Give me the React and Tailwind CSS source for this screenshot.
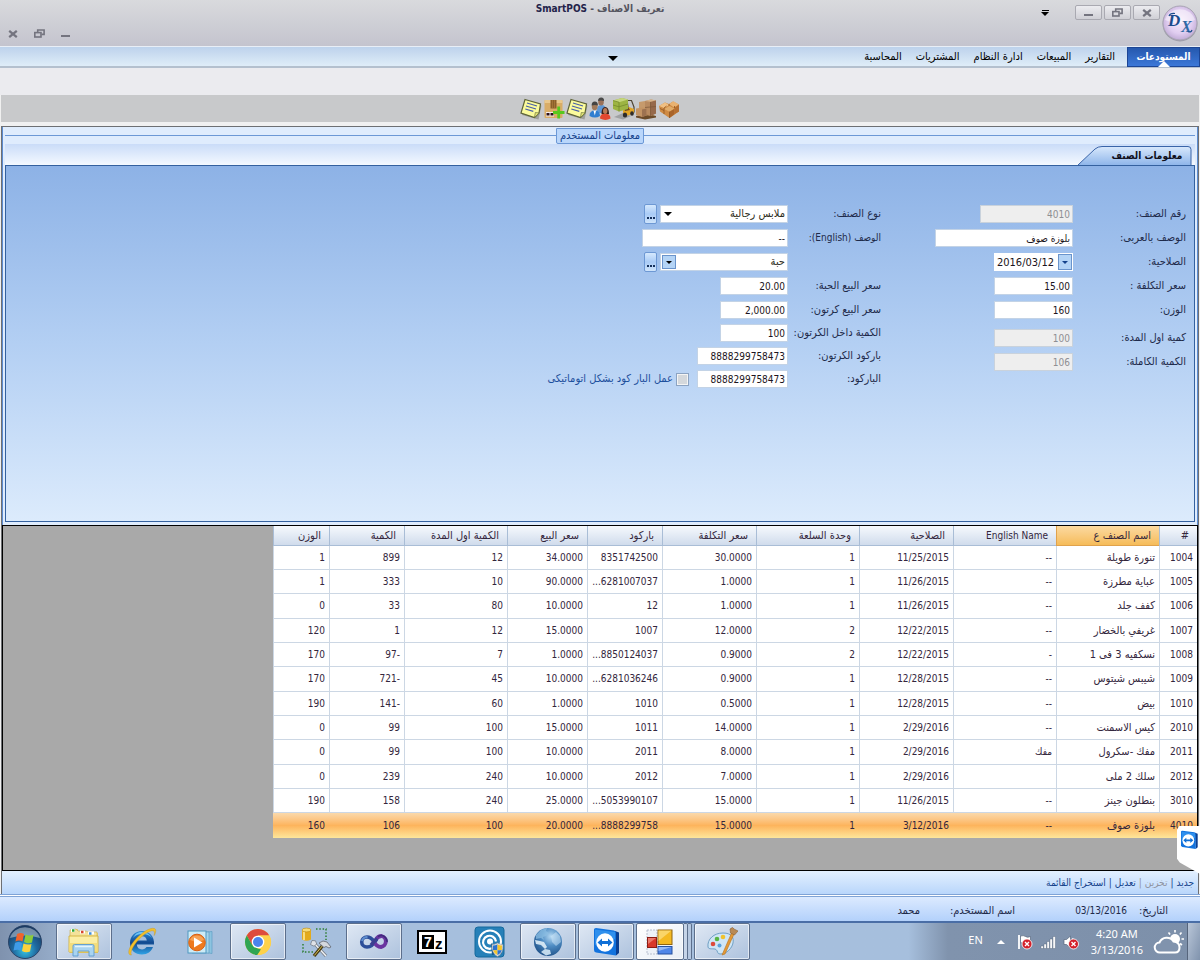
import React from "react";

const MENU = ["التقارير", "المبيعات", "ادارة النظام", "المشتريات", "المحاسبة"];

const COLUMNS = [
  { label: "#", width: "w-[38px]" },
  { label: "اسم الصنف ع", width: "w-[103px]", sorted: true },
  { label: "English Name", width: "w-[103px]", latin: true },
  { label: "الصلاحية", width: "w-[94px]" },
  { label: "وحدة السلعة", width: "w-[103px]" },
  { label: "سعر التكلفة", width: "w-[94px]" },
  { label: "باركود", width: "w-[75px]" },
  { label: "سعر البيع", width: "w-[80px]" },
  { label: "الكمية اول المدة", width: "w-[103px]" },
  { label: "الكمية", width: "w-[75px]" },
  { label: "الوزن", width: "w-[56px]" },
];

const ROWS = [
  ["1004", "تنورة طويلة", "--", "11/25/2015", "1", "30.0000", "8351742500", "34.0000", "12", "899", "1"],
  ["1005", "عباية مطرزة", "--", "11/26/2015", "1", "1.0000", "6281007037...", "90.0000", "10", "333", "1"],
  ["1006", "كفف جلد", "--", "11/26/2015", "1", "1.0000", "12", "10.0000", "80", "33", "0"],
  ["1007", "غريفي بالخضار", "--", "12/22/2015", "2", "12.0000", "1007", "15.0000", "12", "1", "120"],
  ["1008", "نسكفيه 3 فى 1", "-", "12/22/2015", "2", "0.9000", "8850124037...", "1.0000", "7", "-97", "170"],
  ["1009", "شيبس شيتوس", "--", "12/28/2015", "1", "0.9000", "6281036246...", "10.0000", "45", "-721", "170"],
  ["1010", "بيض", "--", "12/28/2015", "1", "0.5000", "1010", "1.0000", "60", "-141", "190"],
  ["2010", "كيس الاسمنت", "--", "2/29/2016", "1", "14.0000", "1011", "15.0000", "100", "99", "0"],
  ["2011", "مفك -سكرول", "مفك", "2/29/2016", "1", "8.0000", "2011", "10.0000", "100", "99", "0"],
  ["2012", "سلك 2 ملى", "", "2/29/2016", "1", "7.0000", "2012", "10.0000", "240", "239", "0"],
  ["3010", "بنطلون جينز", "--", "11/26/2015", "1", "15.0000", "5053990107...", "25.0000", "240", "158", "190"],
  ["4010", "بلوزة صوف", "--", "3/12/2016", "1", "15.0000", "8888299758...", "20.0000", "100", "106", "160"],
];

/* ---------- window glyphs ---------- */

const CloseGlyph = () => (
  <svg width="10" height="8" viewBox="0 0 10 8" fill="none" stroke="#74747f" strokeWidth="2.200">
    <path d="M1.200 0.800L8.800 7.200M8.800 0.800L1.200 7.200" />
  </svg>
);
const RestoreGlyph = () => (
  <svg width="11" height="9" viewBox="0 0 11 9" fill="none" stroke="#74747f" strokeWidth="1.600">
    <path d="M3.700 3V1h6.400v4.400H7.600" />
    <rect x="0.800" y="3.600" width="6.200" height="4.400" />
  </svg>
);
const MinGlyph = () => (
  <svg width="9" height="9" viewBox="0 0 9 9">
    <rect x="0" y="6" width="9" height="2" fill="#74747f" />
  </svg>
);
const Caret = ({ size = 8, fill = "#000" }) => (
  <svg width={size} height={size / 2} viewBox="0 0 8 4">
    <path d="M0 0h8L4 4z" fill={fill} />
  </svg>
);

const DxLogo = () => (
  <svg width="36" height="37" viewBox="0 0 36 37" direction="ltr">
    <defs>
      <radialGradient id="dx" cx="50%" cy="45%" r="60%">
        <stop offset="0" stopColor="#f8ecfb" />
        <stop offset="0.6" stopColor="#e0cdf0" />
        <stop offset="1" stopColor="#b9a4d0" />
      </radialGradient>
    </defs>
    <circle cx="18" cy="19" r="17.400" fill="#9c9ca8" />
    <circle cx="18" cy="18" r="17" fill="url(#dx)" stroke="#a9a4b4" />
    <path d="M3 15a15.400 14 0 0 1 30 0q-15 7-30 0z" fill="#fff" opacity="0.450" />
    <g fill="#1c4c8c" fontFamily="Liberation Serif, serif" fontStyle="italic" fontWeight="bold">
      <text x="6" y="21" fontSize="17">D</text>
      <text x="19" y="27" fontSize="16" fill="#2f6aa6">X</text>
    </g>
    <path d="M7 11Q8 8 13 8.500M30 25q-1 3-4 1.500" stroke="#1c4c8c" strokeWidth="1.200" fill="none" />
  </svg>
);

/* ---------- toolbar icons ---------- */

const NoteIcon = () => (
  <svg width="22" height="22" viewBox="0 0 22 22">
    <path d="M6 3l15.500 4.500-3 14L2 17z" fill="#6d6f60" opacity=".45" />
    <path d="M5 1.500l15.500 4.500-1.500 9-4.500 4.500L1 15z" fill="#fbfb9c" stroke="#5d6338" strokeWidth="1.200" />
    <path d="M19 15l-4.500 4.500.8-5z" fill="#e6e878" stroke="#6d7440" strokeWidth=".7" />
    <path d="M7 5l10 3M6 8l10 3M5.300 11l8 2.300" stroke="#4a5fa8" strokeWidth="1.300" />
  </svg>
);
const BoxAddIcon = () => (
  <svg width="22" height="22" viewBox="0 0 22 22">
    <rect x="1.500" y="2" width="18" height="18" rx="1" fill="#d9ad66" />
    <path d="M1.500 5V3q0-1 1-1h16q1 0 1 1v2z" fill="#e9c88c" />
    <rect x="7.500" y="2" width="6" height="8.500" fill="#8b5f2a" />
    <path d="M9.500 2v8M11.500 2v8" stroke="#a9783a" strokeWidth=".8" />
    <rect x="3" y="14" width="8" height="4.500" fill="#f6ecec" />
    <path d="M3.500 16.200h3M7.500 16.200h3" stroke="#2b0f16" strokeWidth="2.600" />
    <path d="M15.700 8.500v12M10 14.500h11.500" stroke="#57c81e" strokeWidth="2.800" />
  </svg>
);
const PeopleIcon = () => (
  <svg width="22" height="24" viewBox="0 0 22 24">
    <path d="M8 13q0-5 4.500-5T17 13v3H8z" fill="#5f97d4" />
    <ellipse cx="12" cy="5" rx="2.800" ry="3.600" fill="#9b7158" />
    <path d="M9 4q0-3.500 3.200-3.500T15 4q-3-1.200-6 0z" fill="#4a4a4a" />
    <path d="M0.500 19q0-5.500 5.200-5.500T11 19q-5 3-10.500 0z" fill="#2f7ed0" />
    <path d="M4.500 13.500l1.300 5 1.300-5z" fill="#fff" />
    <ellipse cx="5.700" cy="9.500" rx="2.900" ry="3.800" fill="#a07a5c" />
    <path d="M2.600 8.600q0-4 3.200-4t3.100 4q-3-1.400-6.300 0z" fill="#444" />
    <path d="M11 21.500q0-5 5.200-5t5.300 5q-5 2.800-10.500 0z" fill="#e2472f" />
    <path d="M12.500 17q0-7 3.700-7t3.800 7z" fill="#3a2019" />
    <ellipse cx="16.200" cy="14" rx="2.200" ry="3" fill="#b77a57" />
  </svg>
);
const ForkliftIcon = () => (
  <svg width="23" height="23" viewBox="0 0 23 23">
    <path d="M2 20l9-4 8 3-8 3.500z" fill="#7d7f84" opacity=".55" />
    <path d="M15 3.500h4.500L22 10v5l-5 1z" fill="none" stroke="#4d4432" strokeWidth="1.200" />
    <path d="M11 13l6-3 5 2v4l-6 2.500-5-2z" fill="#e2a526" />
    <path d="M12 12l4-2 2 3-5 1z" fill="#6b4b1e" />
    <path d="M1 3.500l9-2.500 6 1.500v9.500L7 14.500 1 12z" fill="#9db443" />
    <path d="M1 3.500l9-2.500 6 1.500-9 2.700z" fill="#c5d67a" />
    <path d="M1 8l6 1.800L16 7M7 5.200v9.300M1 3.500l6 1.700" stroke="#6f8428" strokeWidth=".7" fill="none" />
    <ellipse cx="13" cy="18" rx="2.200" ry="2.600" fill="#2e2c2a" />
    <ellipse cx="20" cy="16.500" rx="1.800" ry="2.300" fill="#2e2c2a" />
  </svg>
);
const PalletIcon = () => (
  <svg width="22" height="22" viewBox="0 0 22 22">
    <path d="M1 18l9 3 11-3-9-3z" fill="#8a653a" />
    <path d="M1 18v1.500l9 2 11-2V18" fill="#6c4b29" />
    <path d="M10 3l6-1.500 5 1v13l-5.500 2.500L10 16z" fill="#b88a60" />
    <path d="M15.500 3.500L21 2.500v13L15.500 18z" fill="#96694a" />
    <path d="M10 3l6-1.500 5 1-5.500 1.200z" fill="#d8b48c" />
    <path d="M4 4l6-1v7H4z" fill="#c69a6c" />
    <path d="M1 10.500l7-1 3.500 1v7L7 19l-6-2z" fill="#c39464" />
    <path d="M7 11.500l4.500-1v7L7 19z" fill="#9d7250" />
    <path d="M10 9.500l11-1M15.500 4v14" stroke="#7b5636" strokeWidth=".7" />
  </svg>
);
const BoxesIcon = () => (
  <svg width="22" height="20" viewBox="0 0 22 20">
    <path d="M1 7l6-3.500L11 5l4-2.500 6 3v7L11.500 19 2 12.500z" fill="#cf8a42" />
    <path d="M1 7l6-3.500L11.500 6 6 9z" fill="#efbf82" />
    <path d="M11 5l4.500-2.800L21 5.500l-5 3z" fill="#e9b271" />
    <path d="M6 10l5.500-3 5 2.700-5 3z" fill="#e0ac6a" />
    <path d="M11.500 12.700l5-3v5.500l-5 3.800z" fill="#a9642a" />
    <path d="M16.500 9l4.500-3.500v7L16.500 15z" fill="#b56f31" />
    <path d="M6 9v6M11.500 12.700V19M2 9.500l4 2M6 9l2.500-2M11 5v2M16.500 9V7" stroke="#8f5522" strokeWidth=".8" />
  </svg>
);

/* ---------- taskbar icons ---------- */

const TeamViewerGlyph = ({ size = 30 }) => (
  <svg width={size} height={size} viewBox="0 0 30 30">
    <path d="M24 4l4 1.500v20.500l-3 2.500z" fill="#0a3f92" />
    <path d="M3 2.500Q3 1 5 1l18 2.500q2 .5 2 2.500v22.500L5 25.500q-2-.4-2-2.500z" fill="#1273de" />
    <path d="M4 2.500L24 5v7L4 18z" fill="#47a8fa" opacity=".55" />
    <ellipse cx="14" cy="15.500" rx="8.800" ry="9.200" fill="#fff" />
    <path d="M6.500 15.500l4.500-4v2.600h6v-2.600l4.500 4-4.500 4v-2.600h-6v2.600z" fill="#0f6fd6" />
  </svg>
);
const StartOrb = () => (
  <svg width="36" height="36" viewBox="0 0 36 36">
    <defs>
      <radialGradient id="orb" cx="50%" cy="75%" r="70%">
        <stop offset="0" stopColor="#35c6e6" />
        <stop offset="0.5" stopColor="#1f6aa0" />
        <stop offset="1" stopColor="#183a63" />
      </radialGradient>
    </defs>
    <circle cx="18" cy="18" r="16.500" fill="url(#orb)" stroke="#2b4468" />
    <path d="M3 14a15.400 14 0 0 1 30 0q-15-5-30 0z" fill="#fff" opacity=".4" />
    <path d="M10 10q4-2 7 0l-1.500 7.500q-3.500-1.800-7 0z" fill="#f0642c" />
    <path d="M18.500 10.500q4 2 8 .3L25 18.500q-4 1.600-8-.5z" fill="#8ccc3c" />
    <path d="M8 19q3.500-1.800 7 0l-1.500 7.500q-3-1.600-7 0z" fill="#3f9be8" />
    <path d="M16.500 19.500q4 2 8 .4L23 27.500q-4 1.800-8-.5z" fill="#fbd23c" />
  </svg>
);
const ExplorerIcon = () => (
  <svg width="32" height="30" viewBox="0 0 32 30">
    <path d="M2 3l8-1v4h20v20H2z" fill="#e9cf6c" />
    <path d="M2 3l6-1 2 2h8l2 1h9v5H2z" fill="#f3e29a" stroke="#c9ac4a" strokeWidth=".6" />
    <path d="M3 3.500h4M12 5h5M20 6h6" stroke="#fff" strokeWidth="3" />
    <path d="M4 3.500h2.500" stroke="#2fa832" strokeWidth="2.500" />
    <path d="M13 5h2.500" stroke="#d9452f" strokeWidth="2.500" />
    <path d="M21 6.500h2.500" stroke="#3d8fe0" strokeWidth="2.500" />
    <path d="M1 9h29v16H1z" fill="#fbeea4" stroke="#d0b040" strokeWidth=".9" />
    <path d="M1 16h29v9H1z" fill="#f1d873" opacity=".8" />
    <path d="M5 29V19q0-1.500 1.500-1.500h18Q26 17.500 26 19v10h-5v-5h-11v5z" fill="#a9d4f0" stroke="#5b9bd0" strokeWidth=".9" />
    <path d="M7 19.500h17" stroke="#e4f4fd" strokeWidth="1.500" />
  </svg>
);
const IeIcon = () => (
  <svg width="32" height="32" viewBox="0 0 32 32">
    <defs>
      <linearGradient id="ie" x1="0" y1="0" x2="0" y2="1">
        <stop offset="0" stopColor="#2f8fdc" />
        <stop offset="0.5" stopColor="#12498f" />
        <stop offset="1" stopColor="#2fa3e6" />
      </linearGradient>
    </defs>
    <path d="M16 5C9 5 4 10 4 17s5 11.500 12 11.500c5.500 0 9.500-3 11-7.500h-6.500c-1 1.600-2.500 2.400-4.500 2.400-3 0-5-1.700-5.200-4.900H28C28.600 10.500 23.500 5 16 5zm-5 9.500c.5-2.700 2.300-4.200 5-4.200s4.500 1.500 4.800 4.200z" fill="url(#ie)" />
    <path d="M7 12c2-4.500 5-6 9-6 4.500 0 8 2 10 6-2-2.500-5.500-4-10-4-4 0-7 1.500-9 4z" fill="#6fc4f4" />
    <path d="M5.500 29C1 29.500 2 22 8.500 14.500 15 7 24 1 28.500 2.500c2 .8 1.500 4-.3 7 .5-2.800.3-4.300-1-4.700C23.500 4 16 9.500 11 15.500 5.500 22 4 27.500 5.500 29z" fill="#f2c02c" stroke="#c8921a" strokeWidth=".4" />
  </svg>
);
const WmpIcon = () => (
  <svg width="28" height="26" viewBox="0 0 28 26">
    <path d="M10 4l16-1.500v22L10 22z" fill="#8cc4e0" stroke="#5f9fc4" strokeWidth=".7" />
    <path d="M6 3h17v21H6z" fill="#a7d5ea" stroke="#5f9fc4" strokeWidth=".7" />
    <rect x="2" y="2" width="18" height="22" fill="#cdebf6" stroke="#4f97c0" />
    <circle cx="11" cy="13.500" r="8.300" fill="#ee7a1e" stroke="#d85f12" />
    <path d="M4 11a7.500 7 0 0 1 14 0q-7 3-14 0z" fill="#f9b26a" opacity=".7" />
    <path d="M8 8.500v10l8.500-5z" fill="#fff" />
  </svg>
);
const ChromeIcon = () => (
  <svg width="28" height="28" viewBox="0 0 28 28">
    <circle cx="14" cy="14" r="13" fill="#fdd14b" />
    <path d="M2.740 7.500A13 13 0 0 1 25.260 7.500H14L8.370 17.250z" fill="#dd4b3e" />
    <path d="M2.740 7.500L8.370 17.250 14 20.500l3 1-3.800 5.500A13 13 0 0 1 2.740 7.500z" fill="#2fa553" />
    <path d="M25.260 7.500H14l5.630 9.750L14 27A13 13 0 0 0 25.260 7.500z" fill="#fdd14b" />
    <circle cx="14" cy="14" r="6.300" fill="#fff" />
    <circle cx="14" cy="14" r="5" fill="#4a84ee" />
  </svg>
);
const DbToolsIcon = () => (
  <svg width="32" height="32" viewBox="0 0 32 32">
    <path d="M16 3h10v11M3 18v8h10" fill="none" stroke="#2f7d32" strokeWidth="1.500" strokeDasharray="1.500 1.800" />
    <path d="M2 4h9v9.500q-4.500 2.500-9 0z" fill="#e3ab1d" />
    <path d="M4 5v9" stroke="#fbe38c" strokeWidth="1.800" />
    <ellipse cx="6.500" cy="4" rx="4.500" ry="1.900" fill="#f7dc74" stroke="#b98511" strokeWidth=".6" />
    <path d="M13 16l13 14" stroke="#7a7f88" strokeWidth="3.200" />
    <path d="M13 16l13 14" stroke="#f0f2f5" strokeWidth="1.400" />
    <path d="M24 18L14 30" stroke="#4a3c14" strokeWidth="3.400" />
    <path d="M23.500 18.500L14.300 29.500" stroke="#d8c25a" strokeWidth="1" />
    <path d="M19 17q4-3.500 8-1l4 5-2 1-3-1.500-2 1z" fill="#d4d8de" stroke="#5f6570" strokeWidth=".8" />
    <path d="M10.500 18.500l1.500-4 3.500.3 1.200 3.200-2.700 2.200z" fill="#dfe2e8" stroke="#6c727c" strokeWidth=".7" />
  </svg>
);
const VsIcon = () => (
  <svg width="30" height="18" viewBox="0 0 30 18">
    <path d="M17.500 6.500C14.500 12 11.500 14 8 14a5.300 5 0 0 1 0-10c2.800 0 5 1.600 7.200 4.600" fill="none" stroke="#2d4f9a" strokeWidth="3.600" />
    <path d="M3 8q1-4 5.500-4" fill="none" stroke="#5f8fd0" strokeWidth="2" />
    <path d="M14 7.500c2.500 4.500 5 6.500 8 6.500a5.600 5.600 0 0 0 .5-11c-2.200 0-4 1-5.800 3.500" fill="none" stroke="#6a35a0" strokeWidth="3.800" />
    <path d="M19 3.500q3.500-2.200 6.500.2T28 9" stroke="#3f2a7c" strokeWidth="1.600" fill="none" />
    <path d="M12 12l6-6.500" stroke="#3a3f90" strokeWidth="3.400" />
  </svg>
);
const SevenZipIcon = () => (
  <svg width="30" height="24" viewBox="0 0 30 24">
    <rect x="1" y="1" width="28" height="22" fill="#fff" stroke="#000" strokeWidth="2" />
    <rect x="5" y="5" width="12" height="14" fill="#000" />
    <text x="7" y="17" fontSize="14" fontWeight="bold" fontFamily="Liberation Sans, sans-serif" fill="#fff">7</text>
    <text x="18" y="19" fontSize="15" fontWeight="bold" fontFamily="Liberation Sans, sans-serif" fill="#000">z</text>
  </svg>
);
const RadarIcon = () => (
  <svg width="32" height="32" viewBox="0 0 32 32">
    <rect x="1" y="1" width="29" height="30" rx="3" fill="#2680b8" stroke="#15689c" />
    <circle cx="16" cy="15.500" r="11" fill="none" stroke="#fff" strokeWidth="2" />
    <path d="M20 21a6.500 6.500 0 1 1 2-5.500" fill="none" stroke="#fff" strokeWidth="2.200" />
    <circle cx="16" cy="15.500" r="3" fill="#fff" />
    <path d="M17 17l11 11-10 1z" fill="#1a5f91" />
    <path d="M18 18.500q3 0 5.500-1.500Q26 18.500 29 18.500q.5 9-5.500 12-6-3-5.500-12z" fill="#e8e8e8" stroke="#8a8f98" strokeWidth=".6" />
    <path d="M19 19.500q2.500 0 4.500-1.200v6H19z" fill="#2c73d0" />
    <path d="M23.500 18.300q2 1.200 4.500 1.200l-.2 4.800h-4.300z" fill="#f5c52a" />
    <path d="M19.200 24.300h4.300v5q-3.500-1.500-4.300-5z" fill="#f5c52a" />
    <path d="M23.500 24.300h4.300q-.8 3.500-4.300 5z" fill="#2c73d0" />
  </svg>
);
const GlobeIcon = () => (
  <svg width="32" height="30" viewBox="0 0 32 30">
    <defs>
      <radialGradient id="glb" cx="60%" cy="30%" r="75%">
        <stop offset="0" stopColor="#b4d8f2" />
        <stop offset="0.45" stopColor="#4f8dc4" />
        <stop offset="1" stopColor="#1d4f86" />
      </radialGradient>
    </defs>
    <circle cx="16" cy="15" r="14" fill="url(#glb)" />
    <path d="M4 8l5-5 6-2-1 3 3 2-3 3-3 1 1 3-3-2-5 1z" fill="#8fc0e4" opacity=".7" />
    <path d="M3 13l5 1 4 1 3 5-2 2-4-4-5-1z" fill="#e8f4fc" opacity=".85" />
    <path d="M9 25l4-3 5 1 1 4-5 1.500z" fill="#dceefa" opacity=".85" />
    <path d="M19 9l5-4 4 4 1 6-5 4-4-4z" fill="#d4eafa" opacity=".5" />
  </svg>
);
const FormsIcon = () => (
  <svg width="28" height="26" viewBox="0 0 28 26">
    <path d="M1 1h10v24H1z" fill="#eef2f8" stroke="#a9b3c4" strokeWidth=".8" strokeDasharray="2 1" />
    <rect x="12" y="1" width="14" height="14.500" fill="#f4b922" stroke="#8f6410" />
    <path d="M12.500 1.500h13L12.500 12z" fill="#fbdc7c" opacity=".8" />
    <rect x="1.500" y="8.500" width="9" height="10" fill="#d8382a" stroke="#8b1c14" />
    <path d="M2 9h8l-8 6z" fill="#f08a7e" opacity=".8" />
    <rect x="12" y="17.500" width="14" height="7.500" fill="#4f86e8" stroke="#26519f" />
    <path d="M12.500 18h13l-13 4z" fill="#a8c6fa" opacity=".8" />
  </svg>
);
const PaintIcon = () => (
  <svg width="32" height="30" viewBox="0 0 32 30">
    <path d="M2 20C1 12 8 6 17 6s11 5 10 10-6 11-13 11c-3 0-2-3-4-4.500S2.500 23 2 20z" fill="#cfe6f5" stroke="#6f9fc4" />
    <circle cx="7" cy="17" r="2.300" fill="#dc4a3a" />
    <circle cx="11" cy="12" r="2.300" fill="#58b544" />
    <circle cx="17" cy="10" r="2.300" fill="#f0c22c" />
    <circle cx="13.500" cy="18.500" r="2" fill="#5aa2dc" />
    <path d="M16 28L26 5l2.500 1L19 27z" fill="#e59a35" stroke="#b5701c" strokeWidth=".6" />
    <path d="M24 2q3-3 4 0l4 2-3.500 4-4-2z" fill="#b98a55" stroke="#8a6236" strokeWidth=".6" />
  </svg>
);

const TASKS = [
  { name: "Explorer", icon: ExplorerIcon, open: true },
  { name: "Internet Explorer", icon: IeIcon },
  { name: "Media Player", icon: WmpIcon },
  { name: "Chrome", icon: ChromeIcon, open: true },
  { name: "SQL Tools", icon: DbToolsIcon },
  { name: "Visual Studio", icon: VsIcon, open: true },
  { name: "7-Zip", icon: SevenZipIcon },
  { name: "Remote Tool", icon: RadarIcon },
  { name: "Globe", icon: GlobeIcon, open: true },
  { name: "TeamViewer", icon: TeamViewerGlyph, open: true },
  { name: "SmartPOS", icon: FormsIcon, open: true, stacked: true },
  { name: "Paint", icon: PaintIcon, open: true },
];

const BadgeX = ({ x }) => (
  <g transform={`translate(${x} 10)`}>
    <circle r="5" fill="#d3202a" stroke="#fff" strokeWidth=".8" />
    <path d="M-2-2l4 4M2-2l-4 4" stroke="#fff" strokeWidth="1.400" />
  </g>
);
const FlagIcon = () => (
  <svg width="16" height="16" viewBox="0 0 16 16">
    <path d="M2 1v14" stroke="#fff" strokeWidth="1.800" />
    <path d="M3.500 2q3-1 5 .5t5 0V9q-3 1-5 0t-5 0z" fill="#fff" stroke="#56657c" strokeWidth=".7" />
    <BadgeX x={10} />
  </svg>
);
const SignalIcon = () => (
  <svg width="16" height="16" viewBox="0 0 16 16" fill="#fff" stroke="#4b5a72" strokeWidth=".4">
    <path d="M1 12h2.400v2.500H1zM4 10h2.400v4.500H4zM7 7.500h2.400v7H7zM10 5h2.400v9.500H10zM13 2.500h2.400v12H13z" />
  </svg>
);
const SpeakerIcon = () => (
  <svg width="16" height="16" viewBox="0 0 16 16">
    <path d="M1 5.500h2.500L7.500 2v12l-4-3.500H1z" fill="#fff" stroke="#56657c" strokeWidth=".7" />
    <path d="M9.500 4q2 2 1.500 5" stroke="#fff" fill="none" />
    <BadgeX x={10.5} />
  </svg>
);
const WeatherIcon = () => (
  <svg width="32" height="26" viewBox="0 0 32 26">
    <circle cx="22" cy="10" r="5" fill="#fff" />
    <path d="M22 1v2.500M15.500 3.500l1.600 2M28.500 3.500l-1.600 2M31 10h-2.500M29 16l-2-1.500" stroke="#fff" strokeWidth="1.600" />
    <path d="M7 23.500a5 5 0 0 1-.5-10 8 8 0 0 1 14-1q6 .5 6 6 0 5-4.500 5z" fill="#8093ad" stroke="#fff" strokeWidth="2" />
  </svg>
);

/* ---------- form pieces ---------- */

const inputBase =
  "h-[18px] min-w-0 border border-[#c3d3e6] bg-white px-[2px] text-right text-[#1b1420] outline-none disabled:border-[#c9d2dc] disabled:bg-[#eeeeee] disabled:text-[#8f8f93]";

function Field({ id, label, value, width, disabled, labelWidth }) {
  return (
    <div className="flex items-center">
      <label htmlFor={id} className={`shrink-0 whitespace-nowrap text-[11px] ${labelWidth}`}>
        {label}
      </label>
      <input id={id} defaultValue={value} disabled={disabled} className={`${inputBase} ${width}`} />
    </div>
  );
}

function Lookup({ id, label, value, boxed }) {
  return (
    <div className="flex h-[18px] items-center text-[11px]">
      {label ? (
        <label htmlFor={id} className="w-[93px] shrink-0 whitespace-nowrap">{label}</label>
      ) : (
        <span className="w-[93px] shrink-0" />
      )}
      <div className="relative">
        <select
          id={id}
          aria-label={label ? undefined : "الوحدة"}
          className="block h-[18px] w-32 appearance-none border border-[#c3d3e6] bg-white px-[2px] text-[#2d2d20] outline-none"
        >
          <option>{value}</option>
        </select>
        <span
          className={
            boxed
              ? "pointer-events-none absolute left-[2px] top-[2px] flex h-[14px] w-[14px] items-center justify-center border border-[#6a94cc] bg-[#b4d4f6]"
              : "pointer-events-none absolute left-1 top-[7px] flex"
          }
        >
          <Caret size={boxed ? 6 : 8} />
        </span>
      </div>
      <button
        type="button"
        aria-label="بحث"
        className="mr-[3px] flex h-5 w-[13px] items-end justify-center rounded-xs border border-[#6d98d4] bg-linear-to-b from-[#d5e8fd] via-[#a9cbf6] to-[#cfe4fb] pb-1"
      >
        <svg width="8" height="2" viewBox="0 0 8 2" fill="#15305c">
          <path d="M0 0h2v2H0zM3 0h2v2H3zM6 0h2v2H6z" />
        </svg>
      </button>
    </div>
  );
}

const windowBtn =
  "flex h-[15px] w-[27px] items-center justify-center rounded-xs border border-[#a9a9b1] bg-linear-to-b from-[#ececf0] to-[#d0d0d6]";

export default function App() {
  return (
    <div
      dir="rtl"
      className="flex min-h-screen flex-col bg-[#f0f0f0] font-['DejaVu_Sans_Condensed','DejaVu_Sans',sans-serif] text-[10px] leading-[14px] text-[#1e2a4a]"
    >
      {/* title bar */}
      <header className="grid h-[46px] grid-cols-[1fr_auto_1fr] bg-linear-to-b from-[#d9dadd] to-[#c4c4ce]">
        <div className="flex items-start gap-[2px] pr-[2px] pt-[5px]">
          <DxLogo />
          <button type="button" aria-label="اغلاق" className={windowBtn}><CloseGlyph /></button>
          <button type="button" aria-label="استعادة" className={windowBtn}><RestoreGlyph /></button>
          <button type="button" aria-label="تصغير" className={windowBtn}><MinGlyph /></button>
          <button type="button" aria-label="تخصيص" className="mr-6 mt-[5px] flex flex-col items-center gap-px">
            <span className="h-px w-[7px] bg-black" />
            <Caret size={8} />
          </button>
        </div>
        <h1 className="pt-[2px] font-bold text-[#55555f]">
          تعريف الاصناف - <span className="text-[#23234a]">SmartPOS</span>
        </h1>
        <div className="flex items-end justify-end gap-4 pb-2 pl-2">
          <button type="button" aria-label="تصغير النافذة"><MinGlyph /></button>
          <button type="button" aria-label="استعادة النافذة"><RestoreGlyph /></button>
          <button type="button" aria-label="اغلاق النافذة"><CloseGlyph /></button>
        </div>
      </header>

      {/* ribbon tabs */}
      <nav className="flex h-[22px] border-b-2 border-t border-b-[#b4c0ce] border-t-[#e8eef6] bg-linear-to-b from-[#bdd2ec] to-[#dfedf8]">
        <div className="flex w-1/2 items-stretch">
          <a href="#stores" className="relative -mb-px w-[73px] border border-[#1c4595] bg-linear-to-b from-[#2558ae] to-[#3c78d8] text-center leading-[18px] font-bold text-white">
            المستودعات
            <svg width="12" height="6" viewBox="0 0 12 6" className="absolute -bottom-px left-1/2 -translate-x-1/2">
              <path d="M0 6l6-6 6 6z" fill="#fff" />
            </svg>
          </a>
          <div className="flex flex-1 items-center gap-[14px] pr-3 text-[11px] text-black">
            {MENU.map((m) => (
              <a key={m} href="#menu" className="whitespace-nowrap">{m}</a>
            ))}
          </div>
        </div>
        <div className="flex w-1/2 items-center pt-1">
          <button type="button" aria-label="المزيد" className="-mr-[18px] flex">
            <Caret size={10} />
          </button>
        </div>
      </nav>
      <div className="h-[27px] bg-[#ebebef]" />
      <div className="mx-px flex h-[27px] items-center justify-center bg-[#c8c9cb]">
        {[BoxesIcon, PalletIcon, ForkliftIcon, PeopleIcon, NoteIcon, BoxAddIcon, NoteIcon].map((Icon, i) => (
          <button key={i} type="button" aria-label={`اداة ${i + 1}`} className="flex w-[23px] justify-center">
            <Icon />
          </button>
        ))}
      </div>
      <div className="h-1 bg-[#f0f0f1]" />

      {/* item form */}
      <main className="mx-px flex flex-1 flex-col border-x border-t border-[#6d6f73]">
        <section className="border-x border-[#5b8bd0] bg-[#dfecfd] px-[2px] pb-[3px]">
          <div className="flex h-[17px] items-center">
            <span className="h-px flex-1 bg-[#6c98d6]" />
            <h2 className="rounded-b-xs border border-[#6c98d6] bg-[#b9d6fb] px-[3px] text-[11px] leading-[14px] text-[#15428b]">
              معلومات المستخدم
            </h2>
            <span className="h-px flex-1 bg-[#6c98d6]" />
          </div>
          <div className="flex h-[21px] items-end bg-linear-to-b from-[#cadcf8] to-[#f4f9ff] pr-[3px]">
            <button type="button" className="relative h-[19px] w-[114px] pl-6 text-center leading-[19px] font-bold text-[#10101c]">
              <svg className="absolute inset-0 h-full w-full" viewBox="0 0 114 19" preserveAspectRatio="none">
                <defs>
                  <linearGradient id="tab" x1="0" y1="0" x2="0" y2="1">
                    <stop offset="0" stopColor="#d8e8fc" />
                    <stop offset="1" stopColor="#8fb6ea" />
                  </linearGradient>
                </defs>
                <path d="M0 19L17 3Q20 .5 24 .5h86q3 0 3 3V19" fill="url(#tab)" stroke="#3a64a8" />
              </svg>
              <span className="relative">معلومات الصنف</span>
            </button>
          </div>
          <form className="flex gap-[54px] border border-[#34619f] bg-linear-to-b from-[#8db2e6] via-[#b3cff3] to-[#dcebfc] pb-[133px] pr-2 pt-[39px]">
            <div className="flex w-[251px] flex-col gap-[10px]">
              <div className="flex flex-col gap-[6px]">
                <Field id="no" label="رقم الصنف:" value="4010" width="w-[93px]" labelWidth="w-[113px]" disabled />
                <Field id="ar" label="الوصف بالعربى:" value="بلوزة صوف" width="w-[138px]" labelWidth="w-[113px]" />
                <div className="flex items-center">
                  <label htmlFor="exp" className="w-[113px] shrink-0 text-[11px]">الصلاحية:</label>
                  <div className="flex h-[18px] w-[79px] items-center bg-white pr-px">
                    <button type="button" aria-label="التقويم" className="flex h-4 w-[14px] shrink-0 items-center justify-center border border-[#6a94cc] bg-[#b4d4f6]">
                      <Caret size={6} fill="#15428b" />
                    </button>
                    <input id="exp" defaultValue="2016/03/12" className="h-full w-full min-w-0 bg-white pr-1 text-[11px] text-[#1b1420] outline-none" />
                  </div>
                </div>
                <Field id="cost" label="سعر التكلفة :" value="15.00" width="w-[79px]" labelWidth="w-[113px]" />
                <Field id="weight" label="الوزن:" value="160" width="w-[79px]" labelWidth="w-[113px]" />
              </div>
              <div className="flex flex-col gap-[6px]">
                <Field id="open" label="كمية اول المدة:" value="100" width="w-[79px]" labelWidth="w-[113px]" disabled />
                <Field id="total" label="الكمية الكاملة:" value="106" width="w-[79px]" labelWidth="w-[113px]" disabled />
              </div>
            </div>
            <div className="flex w-[335px] flex-col gap-[6px]">
              <Lookup id="kind" label="نوع الصنف:" value="ملابس رجالية" />
              <Field
                id="en"
                label={<span className="text-[10px]">الوصف (English):</span>}
                value="--"
                width="w-[146px]"
                labelWidth="w-[93px]"
              />
              <Lookup id="unit" value="حبة" boxed />
              <Field id="p1" label="سعر البيع الحبة:" value="20.00" width="w-[68px]" labelWidth="w-[93px]" />
              <div className="flex flex-col gap-[5px]">
                <Field id="p2" label="سعر البيع كرتون:" value="2,000.00" width="w-[68px]" labelWidth="w-[93px]" />
                <Field id="qty" label="الكمية داخل الكرتون:" value="100" width="w-[68px]" labelWidth="w-[93px]" />
                <Field id="bc1" label="باركود الكرتون:" value="8888299758473" width="w-[91px]" labelWidth="w-[93px]" />
                <div className="flex items-center">
                  <Field id="bc2" label="الباركود:" value="8888299758473" width="w-[91px]" labelWidth="w-[93px]" />
                  <label className="mr-[9px] flex items-center gap-1 whitespace-nowrap text-[11px] text-[#1d4f9c]">
                    <input type="checkbox" className="h-[11px] w-[11px] appearance-none border border-[#f4f4f4] bg-[#d4d8dc] outline outline-[#8ba3c2]" />
                    عمل البار كود بشكل اتوماتيكى
                  </label>
                </div>
              </div>
            </div>
          </form>
        </section>

        {/* items grid */}
        <section className="relative flex-1 border border-black bg-[#a9a9a9]">
          <table className="w-[924px] table-fixed border-separate border-spacing-0 bg-white text-[#33263c]">
            <thead>
              <tr>
                {COLUMNS.map((c) => (
                  <th
                    key={c.label}
                    scope="col"
                    className={`h-5 whitespace-nowrap border-b border-l p-0 pr-2 text-right font-normal ${c.width} ${
                      c.latin ? "text-[10px]" : "text-[11px]"
                    } ${
                      c.sorted
                        ? "border-[#e0a24c] bg-linear-to-b from-[#fbd9a0] to-[#f6bc58]"
                        : "border-[#a9bdd6] bg-linear-to-b from-[#f6f9fd] to-[#d0dcec]"
                    }`}
                  >
                    {c.label}
                  </th>
                ))}
              </tr>
            </thead>
            <tbody>
              {ROWS.map((r, i) => (
                <tr
                  key={r[0]}
                  className={`h-6 nth-[3n]:h-[25px] ${
                    i === ROWS.length - 1 ? "bg-linear-to-b from-[#fad9ab] via-[#fdb45c] to-[#fde69a]" : ""
                  }`}
                >
                  {r.map((v, j) => (
                    <td
                      key={j}
                      className={`whitespace-nowrap p-0 pr-1 ${j === 1 ? "text-[11px]" : ""} ${
                        i === ROWS.length - 1 ? "" : "border-b border-l border-[#ccd7e4]"
                      }`}
                    >
                      {v}
                    </td>
                  ))}
                </tr>
              ))}
            </tbody>
          </table>
          <div className="absolute -bottom-1 -right-[3px] z-10 flex h-[48px] w-[23px] items-start justify-center bg-white pt-1 [clip-path:polygon(0_8%,10%_0,100%_0,100%_100%,12%_76%,0_68%)]">
            <TeamViewerGlyph size={20} />
          </div>
        </section>

        <div className="flex h-[23px] items-center gap-[3px] bg-linear-to-b from-[#e3f0ff] to-[#b9d6fb] pr-1 pt-px text-[#15428b]">
          <button type="button">جديد</button>
          <span>|</span>
          <button type="button" className="text-[#8f93a0]">تخزين</button>
          <span className="text-[#8f93a0]">|</span>
          <button type="button">تعديل</button>
          <span>|</span>
          <button type="button">استخراج القائمة</button>
        </div>
      </main>

      {/* status bar */}
      <div className="h-[3px] border-y border-[#7fa3d6] bg-white" />
      <footer className="flex h-[26px] items-center border-b-2 border-[#4a6ea6] bg-linear-to-b from-[#dceaff] to-[#b3d1fb] pr-8 pt-1 text-[11px]">
        <span className="w-[41px]">التاريخ:</span>
        <span className="w-28 text-[10px]">03/13/2016</span>
        <span className="w-[95px]">اسم المستخدم:</span>
        <span>محمد</span>
      </footer>

      {/* taskbar */}
      <div dir="ltr" className="flex h-[37px] items-stretch bg-linear-to-r from-[#7f92ae] via-[#a6bfdd] via-8% to-[#a6bfdd] font-['Noto_Sans',sans-serif]">
        <button type="button" aria-label="Start" className="flex w-14 items-center pl-[7px]">
          <StartOrb />
        </button>
        <div className="flex gap-[2px]">
          {TASKS.map(({ name, icon: Icon, open, stacked }) => (
            <div key={name} className="flex w-14">
              <button
                type="button"
                aria-label={name}
                className={`flex flex-1 items-center justify-center ${
                  open ? "rounded-xs border border-[#5c6f8c] bg-linear-to-br inset-ring inset-ring-white/60" : ""
                } ${stacked ? "from-white to-[#e8eef6]" : open ? "from-[#dfe8f4] to-[#adc2dd]" : ""}`}
              >
                <Icon />
              </button>
              {stacked && (
                <>
                  <span className="w-1 rounded-r-xs border-y border-r border-[#5c6f8c] bg-[#c5d4e8]" />
                  <span className="w-1 rounded-r-xs border-y border-r border-[#5c6f8c] bg-[#b4c7e0]" />
                </>
              )}
            </div>
          ))}
        </div>
        <div className="flex-1 bg-linear-to-r from-[#a6bfdd] via-[#a6bfdd] via-80% to-[#8093ad]" />
        <div className="flex items-center bg-linear-to-r from-[#8093ad] to-[#7d90aa] pl-5 text-white">
          <span className="pb-1 text-[11px]">EN</span>
          <svg width="8" height="4" viewBox="0 0 8 4" className="ml-[14px]"><path d="M0 4h8L4 0z" fill="#fff" /></svg>
          <div className="ml-3 flex gap-[7px]">
            <FlagIcon />
            <SignalIcon />
            <SpeakerIcon />
          </div>
          <div className="ml-3 text-center text-[11px] leading-4">
            <div>4:20 AM</div>
            <div>3/13/2016</div>
          </div>
          <span className="ml-[10px]"><WeatherIcon /></span>
          <button type="button" aria-label="Show desktop" className="ml-[2px] h-full w-[13px] border-l border-[#56657c] bg-linear-to-br from-[#b9c6d8] to-[#8093ad]" />
        </div>
      </div>
    </div>
  );
}
